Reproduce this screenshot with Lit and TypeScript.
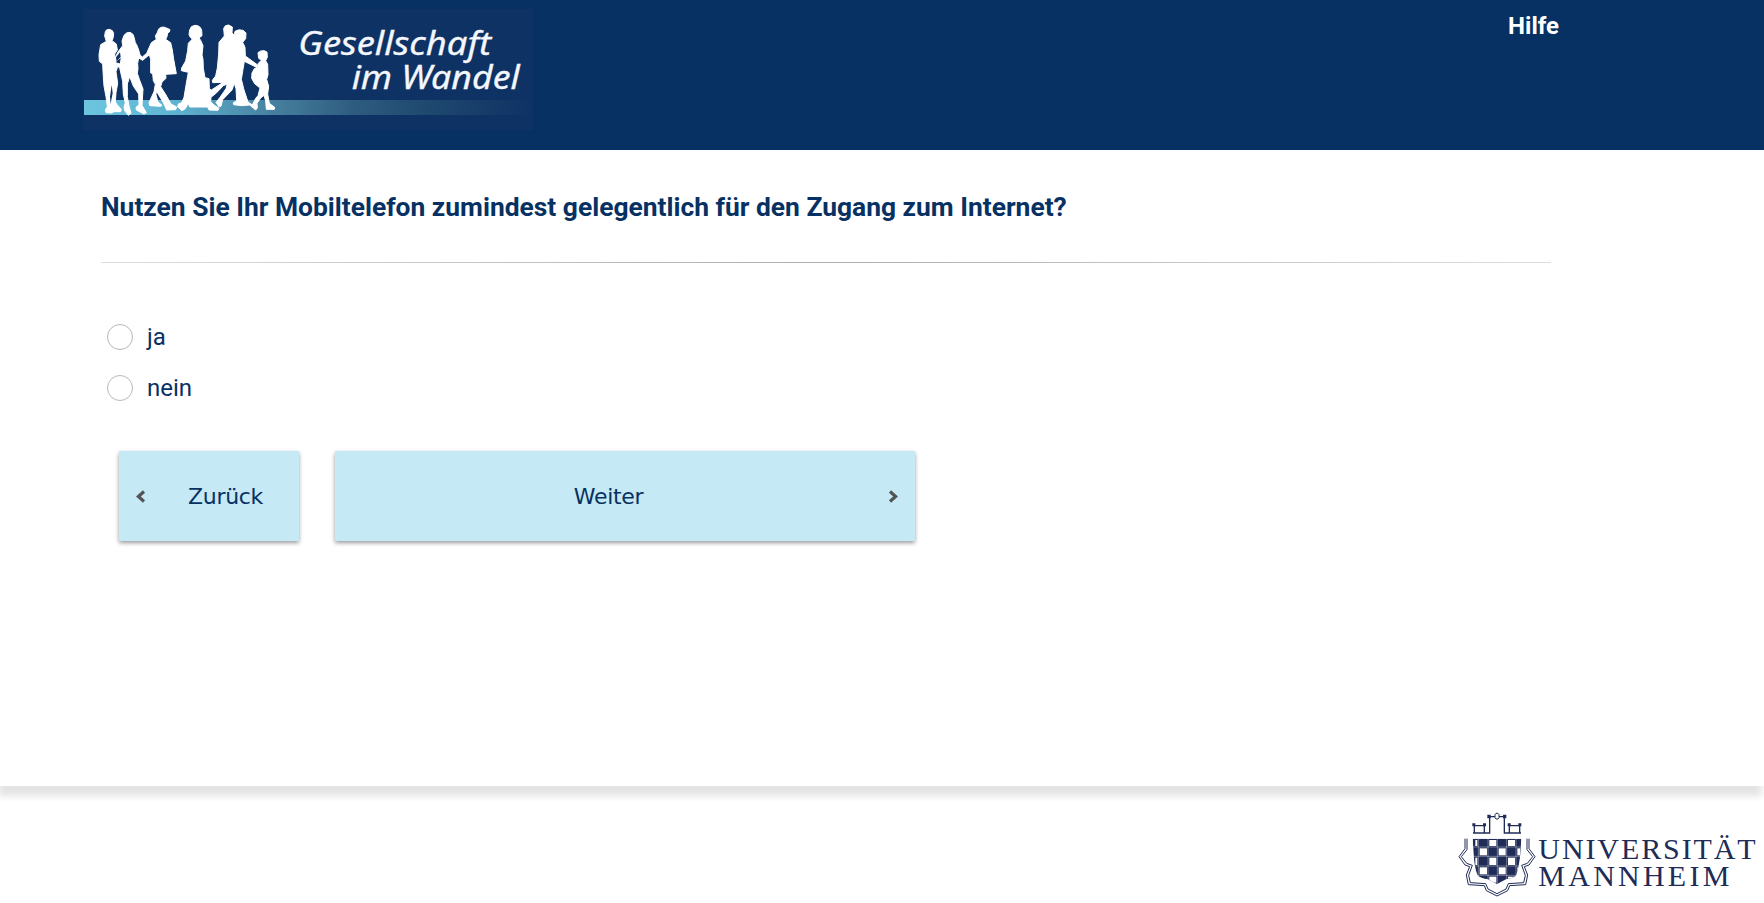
import { LitElement, html, css, svg } from "lit";
import { customElement } from "lit/decorators.js";

@customElement("wandel-logo")
class WandelLogo extends LitElement {
  static styles = css`
    :host { display: block; width: 450px; height: 121px; }
    svg { display: block; }
    .name { font: italic 400 98px "Noto Sans", sans-serif; fill: #f4f7fc; stroke: #f4f7fc; stroke-width: 1; }
  `;
  render() {
    return html`<svg width="450" height="121" viewBox="27 27 1350 363">
      <defs>
        <linearGradient id="bar" x1="0" x2="1">
          <stop offset="0" stop-color="#6cc5df" />
          <stop offset="0.2" stop-color="#5fb4d2" />
          <stop offset="0.42" stop-color="#47809f" />
          <stop offset="0.6" stop-color="#2e5c80" />
          <stop offset="0.75" stop-color="#204a70" />
          <stop offset="0.9" stop-color="#163b68" />
          <stop offset="1" stop-color="#0f3265" />
        </linearGradient>
      </defs>
      <rect x="27" y="27" width="1350" height="363" fill="#0f3265" />
      <rect x="30" y="300" width="1347" height="45" fill="url(#bar)" />
      <g fill="#fff" stroke="#fff" stroke-width="3" stroke-linejoin="round">
        <path d="M94 95Q96 88 106 88Q118 90 119 101L117 115L114 122L127 132L130 150L122 162L124 176L120 182L128 190L130 203L126 215L131 250L126 278L124 306L130 315L142 328L140 335L120 335L112 339L96 338L94 330L100 320L96 290L90 258L88 232L86 192L76 184L75 164L80 134L97 124L92 108Z" />
        <path d="M150 106Q157 96 168 97Q180 101 181 115L184 128L188 134L194 150L198 165L205 171L218 160L232 128L247 118L244 108L251 96Q252 82 268 81L280 85L288 89L286 96L281 99L279 110L275 118L290 128L295 150L299 178L307 221L275 223L276 235L264 246L260 260L276 285L291 312L308 321L305 329L278 330L268 308L247 273L246 284L252 306L264 316L260 319L227 317L225 308L240 275L244 253L238 242L236 221L230 219L230 178L226 164L206 181L194 174L191 190L192 206L190 220L196 238L207 267L204 316L217 338L210 342L187 330L186 322L195 314L194 282L178 258L167 230L160 252L160 290L165 318L171 340L163 346L152 332L150 321L154 309L148 283L146 244L137 203L122 194L122 188L139 192L142 171L122 188L120 180L132 156L146 137L144 123Z" />
        <path d="M347 90Q350 77 363 76Q379 76 383 91L384 107L375 114L380 121L387 137L384 165L387 178L388 205L393 233L405 236L406 266L412 270L448 247L416 248L415 241L425 228L430 204L434 162L435 127L451 108L449 85Q453 74 464 75L475 81L474 99L480 105L483 94Q493 87 507 91L516 99L515 116L506 127L513 142L514 168L551 195L548 202L511 184L507 208L502 238L510 270L522 306L535 315L545 295L552 287L558 264L542 251L533 235L534 219L541 206L551 201L553 190L562 181L554 175L552 158Q559 151 570 152L579 156L580 172L575 182L581 193L582 224L578 238L584 259L581 282L586 310L602 322L601 328L577 328L575 303L570 286L560 294L549 310L550 324L545 330L527 315L503 317L479 314L478 308L488 302L486 266L481 250L474 270L446 299L441 318L435 321L426 307L438 292L456 266L460 252L448 257L428 278L411 292L410 305L420 315L435 325L432 331L405 330L401 321L347 321L343 310L334 326L324 332L311 321L313 312L323 308L330 292L337 250L343 217L322 212L323 204L335 183L341 152L343 130L355 117L349 112L345 104Z" />
      </g>
      <g fill="#0f3265">
        <path d="M126 172L138 157L140 170L128 185Z" />
        <path d="M113 255L116 280L112 300L110 312L108 290Z" />
      </g>
      <text class="name" x="673" y="164" textLength="578" lengthAdjust="spacingAndGlyphs">Gesellschaft</text>
      <text class="name" x="833" y="267" textLength="504" lengthAdjust="spacingAndGlyphs">im Wandel</text>
    </svg>`;
  }
}

@customElement("uni-logo")
class UniLogo extends LitElement {
  static styles = css`
    :host { display: block; width: 300px; height: 90px; }
    svg { display: block; }
    .word { font: 400 90px "Liberation Serif", serif; fill: #202c57; }
  `;
  render() {
    const xs = [101, 114, 143, 171, 199, 227, 243];
    const ys = [177, 202, 230, 259, 287, 312];
    const cells = [];
    for (let r = 0; r < 5; r++)
      for (let c = 0; c < 6; c++)
        if ((r + c) % 2 === 0)
          cells.push(svg`<rect x=${xs[c] + 4} y=${ys[r] + 4} width=${xs[c + 1] - xs[c] - 7} height=${ys[r + 1] - ys[r] - 7} fill="#fff"/>`);
    return html`<svg width="300" height="90" viewBox="50 94 900 270">
      <defs><clipPath id="shield"><path d="M97 177H243L240 222Q236 262 227 288Q212 298 197 299L170 313L143 299Q121 296 112 287Q102 265 100 222Z" /></clipPath></defs>
      <g clip-path="url(#shield)">
        <rect x="95" y="175" width="150" height="140" fill="#202c57" />${cells}
        <path d="M95 202H245M95 230H245M95 259H245M95 287H245M114 175V315M143 175V315M171 175V315M199 175V315M227 175V315" stroke="#fff" stroke-opacity="0.6" stroke-width="1.8" />
      </g>
      <g fill="none" stroke="#202c57" stroke-width="3">
        <path stroke-width="4" d="M98 160H148V111H192V160H242M102 134V160M132 134V160M100 138H134M207 134V160M238 134V160M205 138H240" />
        <path fill="#fff" d="M164 105L167 101H173L176 105V114L173 118H167L164 114Z" />
        <path d="M74 177V207L56 231L74 256L88 261L78 286L84 315L132 318L138 333L170 349L202 333L208 318L256 315L262 286L252 261L266 256L284 231L266 207V177" />
        <path d="M80 177V210L63 231L79 251L96 257L85 287L90 309L136 312L143 328L170 342L197 328L204 312L250 309L255 287L244 257L261 251L277 231L260 210V177" />
      </g>
      <g fill="#202c57"><path d="M96 131h9v9h-9zM128 131h9v9h-9zM202 131h9v9h-9zM234 131h9v9h-9zM141 105h10v11h-10zM188 105h10v11h-10z" /></g>
      <text class="word" x="294" y="238" textLength="652">UNIVERSITÄT</text>
      <text class="word" x="294" y="318" textLength="573">MANNHEIM</text>
    </svg>`;
  }
}

@customElement("app-root")
class AppRoot extends LitElement {
  static styles = css`
    :host { display: flex; flex-direction: column; height: 903px; overflow: hidden; background: #fff; color: #083163; font-family: Roboto, sans-serif; }
    * { box-sizing: border-box; }
    header { height: 150px; flex: none; background: #083163; display: flex; justify-content: space-between; align-items: flex-start; padding: 9px 205px 0 83px; }
    .help { color: #fff; font-size: 24px; line-height: 28px; font-weight: 700; text-decoration: none; padding-top: 3px; }
    main { height: 636px; flex: none; padding: 42px 213px 0 101px; box-shadow: -2px 10px 7px 0 rgba(0, 0, 0, 0.11); }
    h1 { margin: 0; font-size: 26.4px; line-height: 30px; font-weight: 700; white-space: nowrap; }
    .rule { height: 1px; margin-top: 40px; background: linear-gradient(to right, #dedede, #adadad 50%, #dedede); }
    .options { display: grid; gap: 25px; padding: 61px 0 0 6px; }
    .option { display: flex; align-items: center; gap: 14px; height: 26px; font-size: 24px; line-height: 26px; }
    .radio { width: 26px; height: 26px; border: 1px solid #b8b8b8; border-radius: 50%; }
    .nav { display: flex; gap: 36px; padding: 50px 0 0 18px; }
    button { border: 0; padding: 0 17px; height: 90px; display: flex; align-items: center; background: #c5e9f5; color: #083163; font: 22px "DejaVu Sans", sans-serif; letter-spacing: -0.3px; border-radius: 1px; box-shadow: 0 2px 4px rgba(0, 0, 0, 0.4); }
    .back { width: 180px; }
    .next { width: 580px; }
    .label { flex: 1; text-align: center; }
    .back .label { padding-left: 23px; }
    .next .label { padding-right: 23px; }
    .chev { display: block; flex: none; }
    footer { height: 117px; display: flex; justify-content: flex-end; padding: 25px 7px 0 0; }
  `;
  render() {
    return html`
      <header><wandel-logo></wandel-logo><a class="help">Hilfe</a></header>
      <main>
        <h1>Nutzen Sie Ihr Mobiltelefon zumindest gelegentlich für den Zugang zum Internet?</h1>
        <div class="rule"></div>
        <div class="options">
          ${["ja", "nein"].map((t) => html`<label class="option"><span class="radio"></span><span>${t}</span></label>`)}
        </div>
        <div class="nav">
          <button class="back">
            <svg class="chev" width="10" height="14" viewBox="0 0 10 14"><path d="M8 2.5L2.4 7.5L8 12.5" fill="none" stroke="#555" stroke-width="3.2" /></svg>
            <span class="label">Zurück</span>
          </button>
          <button class="next">
            <span class="label">Weiter</span>
            <svg class="chev" width="10" height="14" viewBox="0 0 10 14"><path d="M2 2.5L7.6 7.5L2 12.5" fill="none" stroke="#555" stroke-width="3.2" /></svg>
          </button>
        </div>
      </main>
      <footer><uni-logo></uni-logo></footer>
    `;
  }
}
